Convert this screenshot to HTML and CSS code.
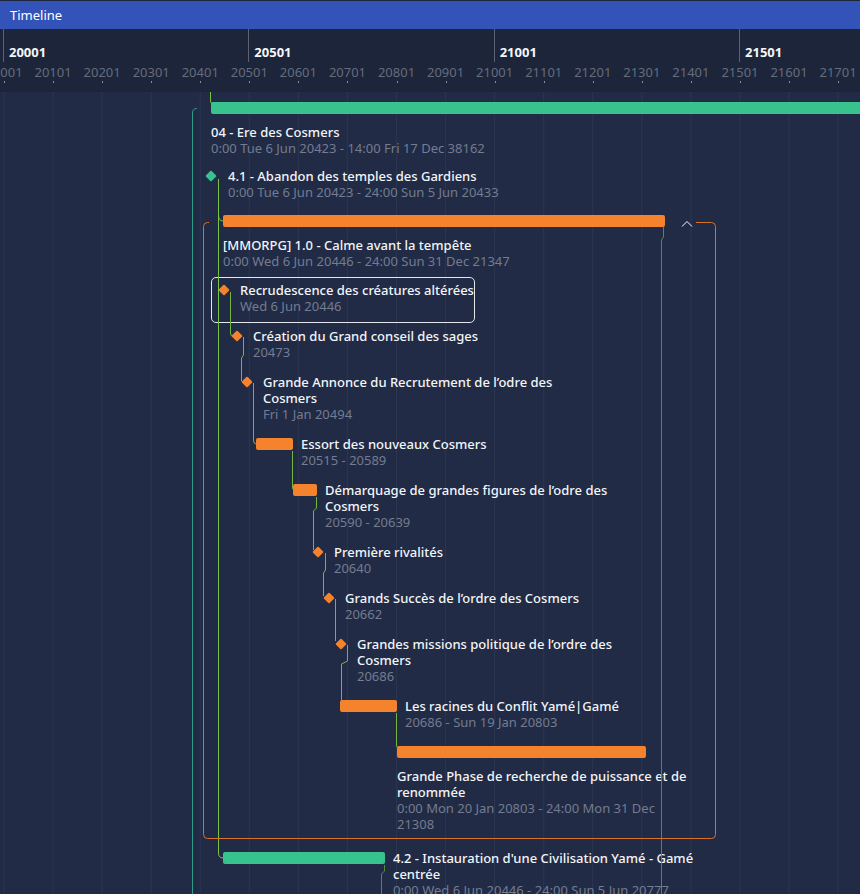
FILE: index.html
```html
<!DOCTYPE html>
<html lang="fr">
<head>
<meta charset="utf-8">
<title>Timeline</title>
<link rel="stylesheet" href="styles.css">
</head>
<body>
<div class="app">
  <header class="titlebar">Timeline</header>
  <div class="scale">
    <div class="majors">
      <div class="major">20001</div>
      <div class="major">20501</div>
      <div class="major">21001</div>
      <div class="major">21501</div>
    </div>
    <div class="minors">
      <span class="minor">20001</span><span class="minor">20101</span><span class="minor">20201</span><span class="minor">20301</span><span class="minor">20401</span><span class="minor">20501</span><span class="minor">20601</span><span class="minor">20701</span><span class="minor">20801</span><span class="minor">20901</span><span class="minor">21001</span><span class="minor">21101</span><span class="minor">21201</span><span class="minor">21301</span><span class="minor">21401</span><span class="minor">21501</span><span class="minor">21601</span><span class="minor">21701</span>
    </div>
  </div>
  <div class="chart">
    <div class="row summary row-a" style="margin-left:211px">
      <div class="bar green" style="width:700px"></div>
      <div class="label"><div class="title">04 - Ere des Cosmers</div><div class="sub">0:00 Tue 6 Jun 20423 - 14:00 Fri 17 Dec 38162</div></div>
    </div>
    <div class="row" style="margin-left:205px">
      <div class="dia green"></div>
      <div class="label label-b"><div class="title">4.1 - Abandon des temples des Gardiens</div><div class="sub">0:00 Tue 6 Jun 20423 - 24:00 Sun 5 Jun 20433</div></div>
    </div>
    <div class="row summary row-c" style="margin-left:223px">
      <div class="bar orange" style="width:442px"></div>
      <div class="label"><div class="title">[MMORPG] 1.0 - Calme avant la tempête</div><div class="sub">0:00 Wed 6 Jun 20446 - 24:00 Sun 31 Dec 21347</div></div>
    </div>
    <div class="row selected" style="margin-left:218px">
      <div class="dia orange"></div>
      <div class="label"><div class="title">Recrudescence des créatures altérées</div><div class="sub">Wed 6 Jun 20446</div></div>
    </div>
    <div class="row" style="margin-left:231px">
      <div class="dia orange"></div>
      <div class="label"><div class="title">Création du Grand conseil des sages</div><div class="sub">20473</div></div>
    </div>
    <div class="row" style="margin-left:241px">
      <div class="dia orange"></div>
      <div class="label"><div class="title">Grande Annonce du Recrutement de l’odre des<br>Cosmers</div><div class="sub">Fri 1 Jan 20494</div></div>
    </div>
    <div class="row" style="margin-left:256px">
      <div class="bar orange" style="width:37px"></div>
      <div class="label"><div class="title">Essort des nouveaux Cosmers</div><div class="sub">20515 - 20589</div></div>
    </div>
    <div class="row" style="margin-left:293px">
      <div class="bar orange" style="width:24px"></div>
      <div class="label"><div class="title">Démarquage de grandes figures de l’odre des<br>Cosmers</div><div class="sub">20590 - 20639</div></div>
    </div>
    <div class="row" style="margin-left:312px">
      <div class="dia orange"></div>
      <div class="label"><div class="title">Première rivalités</div><div class="sub">20640</div></div>
    </div>
    <div class="row" style="margin-left:323px">
      <div class="dia orange"></div>
      <div class="label"><div class="title">Grands Succès de l’ordre des Cosmers</div><div class="sub">20662</div></div>
    </div>
    <div class="row" style="margin-left:335px">
      <div class="dia orange"></div>
      <div class="label"><div class="title">Grandes missions politique de l’ordre des<br>Cosmers</div><div class="sub">20686</div></div>
    </div>
    <div class="row" style="margin-left:340px">
      <div class="bar orange" style="width:57px"></div>
      <div class="label"><div class="title">Les racines du Conflit Yamé|Gamé</div><div class="sub">20686 - Sun 19 Jan 20803</div></div>
    </div>
    <div class="row summary row-m" style="margin-left:397px">
      <div class="bar orange" style="width:249px"></div>
      <div class="label"><div class="title">Grande Phase de recherche de puissance et de<br>renommée</div><div class="sub">0:00 Mon 20 Jan 20803 - 24:00 Mon 31 Dec<br>21308</div></div>
    </div>
    <div class="row" style="margin-left:223px">
      <div class="bar green" style="width:162px"></div>
      <div class="label"><div class="title">4.2 - Instauration d'une Civilisation Yamé - Gamé<br>centrée</div><div class="sub">0:00 Wed 6 Jun 20446 - 24:00 Sun 5 Jun 20777</div></div>
    </div>

    <svg class="links" width="860" height="802" viewBox="0 0 860 802" fill="none">
      <g transform="translate(0,-92)">
        <path class="l-teal" d="M197,108.5 Q192.5,108.5 192.5,113 V900"/>
        <path class="l-lime" d="M210.5,92 V100 Q210.5,104 212,104"/>
        <path class="l-lime" d="M218.5,179 V853 Q218.5,858 223,858"/>
        <path class="l-lime" d="M218.5,215 Q218.5,221 223,221"/>
        <path class="l-dep" d="M230.5,292 V333 Q230.5,336 232,336"/>
        <path class="l-dep" d="M243.5,337 V355 L241.5,358 V381 H242"/>
        <path class="l-dep" d="M253.5,383 V440 Q253.5,444 256,444"/>
        <path class="l-dep" d="M292.5,451 V487 Q292.5,490 294,490"/>
        <path class="l-dep" d="M316.5,497 V508 L313.5,511 V550"/>
        <path class="l-dep" d="M325.5,553 V570 L323.5,573 V596"/>
        <path class="l-dep" d="M335.5,599 V641"/>
        <path class="l-dep" d="M347.5,645 V661 L341.5,664 V700"/>
        <path class="l-dep" d="M396.5,713 V745 Q396.5,748 398,748"/>
        <path class="l-dark" d="M663.5,227 V237 L661.5,240 V900"/>
        <path class="l-dark" d="M384.5,865 V871 L381.5,874 V900"/>
        <path class="l-group" d="M209,222.5 H207.5 Q203.5,222.5 203.5,226.5 V834.5 Q203.5,838.5 207.5,838.5 H711.5 Q715.5,838.5 715.5,834.5 V226.5 Q715.5,222.5 711.5,222.5 H696"/>
        <polyline class="chev" points="682,226.5 687,221.5 692,226.5"/>
      </g>
    </svg>
  </div>
</div>
</body>
</html>
```

FILE: styles.css
```css
* { box-sizing: border-box; }

html, body {
  margin: 0;
  padding: 0;
  background: #1c2539;
}

.app {
  width: 860px;
  height: 894px;
  overflow: hidden;
  background: #1c2539;
  font-family: "Noto Sans", "Open Sans", sans-serif;
  font-size: 13px;
  padding-top: 1px;
}

.titlebar {
  height: 28px;
  line-height: 28px;
  background: #3353b8;
  color: #ffffff;
  padding-left: 10px;
  font-size: 13px;
}

.scale {
  height: 63px;
  overflow: hidden;
}

.majors {
  display: flex;
  margin-left: 3px;
  height: 33px;
}

.major {
  flex: none;
  width: 245.35px;
  border-left: 1px solid #5a6274;
  color: #f4f6fa;
  font-weight: 700;
  font-size: 13px;
  line-height: 16px;
  padding: 15px 0 0 5px;
}

.minors {
  display: flex;
  margin-left: -20.5px;
  height: 30px;
}

.minor {
  flex: none;
  width: 49.07px;
  text-align: center;
  color: #646c7e;
  font-size: 13px;
  line-height: 16px;
  padding-top: 2px;
  position: relative;
}

.minor::after {
  content: "";
  position: absolute;
  left: 24.5px;
  top: 19px;
  width: 1px;
  height: 2px;
  background: #8a90a0;
}

.chart {
  position: relative;
  height: 802px;
  overflow: hidden;
  background-color: #212b45;
  background-image: linear-gradient(to right, #2b3550 0, #2b3550 1px, transparent 1px);
  background-size: 49.07px 100%;
  background-position: 3.5px 0;
}

.row {
  display: flex;
  align-items: flex-start;
  padding: 6px 0 8px;
  white-space: nowrap;
  position: relative;
}

.row.summary {
  flex-direction: column;
}

.row-a { padding: 10px 0 6px; }
.row-c { padding: 7px 0 7px; }
.row-m { padding: 8px 0 12px; }

.bar {
  flex: none;
  height: 12px;
  margin: 2px 8px 0 0;
  border-radius: 2px;
}

.summary .bar {
  margin: 0 0 10px 0;
}

.bar.green { background: #38c38e; }
.bar.orange { background: #f5822c; }

.dia {
  flex: none;
  width: 12px;
  height: 12px;
  margin: 2px 10px 0 0;
  position: relative;
}

.dia::before {
  content: "";
  position: absolute;
  left: 2px;
  top: 2px;
  width: 8px;
  height: 8px;
  border-radius: 1px;
  transform: rotate(45deg);
}

.dia.green::before { background: #38c38e; }
.dia.orange::before { background: #f5822c; }

.label-b { margin-left: 1px; }

.label {
  line-height: 16px;
}

.title {
  color: #f3f5f8;
  font-weight: 500;
}

.sub {
  color: #737c90;
}

.selected::before {
  content: "";
  position: absolute;
  left: -7px;
  top: 1px;
  width: 262px;
  height: 44px;
  border: 1px solid #e4e7ec;
  border-radius: 5px;
}

.links {
  position: absolute;
  left: 0;
  top: 0;
  pointer-events: none;
  overflow: visible;
}

.links path, .links polyline {
  fill: none;
  stroke-width: 1;
}

.l-teal { stroke: #2e9c86; }
.l-lime { stroke: #7cc242; }
.l-dep { stroke: #74b53c; }
.l-dark { stroke: #4e8f3e; }
.l-group { stroke: #d8722b; }
.chev { stroke: #ffffff; stroke-width: 2; }
```
